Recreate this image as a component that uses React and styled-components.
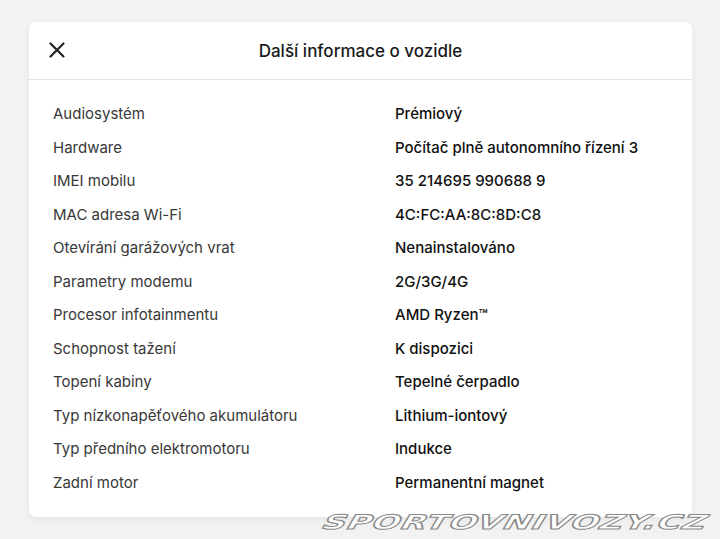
import React from "react";
import styled, { createGlobalStyle } from "styled-components";

const GlobalStyle = createGlobalStyle`
  html, body {
    margin: 0;
    padding: 0;
    background: #f2f2f2;
    font-family: Inter, "Noto Sans", sans-serif;
  }
`;

const rows = [
  ["Audiosystém", "Prémiový"],
  ["Hardware", "Počítač plně autonomního řízení 3"],
  ["IMEI mobilu", "35 214695 990688 9"],
  ["MAC adresa Wi-Fi", "4C:FC:AA:8C:8D:C8"],
  ["Otevírání garážových vrat", "Nenainstalováno"],
  ["Parametry modemu", "2G/3G/4G"],
  ["Procesor infotainmentu", "AMD Ryzen™"],
  ["Schopnost tažení", "K dispozici"],
  ["Topení kabiny", "Tepelné čerpadlo"],
  ["Typ nízkonapěťového akumulátoru", "Lithium-iontový"],
  ["Typ předního elektromotoru", "Indukce"],
  ["Zadní motor", "Permanentní magnet"],
];

function App() {
  return (
    <Page>
      <GlobalStyle />
      <Card>
        <Header>
          <CloseButton aria-label="Zavřít">
            <svg width="18" height="18" viewBox="0 0 18 18">
              <path
                d="M2.5 2.5 L15.5 15.5 M15.5 2.5 L2.5 15.5"
                stroke="#222"
                strokeWidth="2.2"
                strokeLinecap="round"
              />
            </svg>
          </CloseButton>
          <Title>Další informace o vozidle</Title>
        </Header>
        <List>
          {rows.map(([label, value]) => (
            <Row key={label}>
              <Label>{label}</Label>
              <Value>{value}</Value>
            </Row>
          ))}
        </List>
      </Card>
      <Watermark>SPORTOVNIVOZY.CZ</Watermark>
    </Page>
  );
}

const Page = styled.div`
  position: relative;
  width: 720px;
  height: 539px;
  padding: 22px 28px 0 29px;
  box-sizing: border-box;
  overflow: hidden;
`;

const Card = styled.div`
  background: #fff;
  border-radius: 7px;
  box-shadow: 0 2px 10px rgba(0, 0, 0, 0.06);
  height: 495px;
  display: flex;
  flex-direction: column;
`;

const Header = styled.div`
  position: relative;
  height: 57px;
  display: flex;
  align-items: center;
  justify-content: center;
  border-bottom: 1px solid #e2e2e2;
`;

const CloseButton = styled.button`
  position: absolute;
  left: 19px;
  top: 19px;
  width: 18px;
  height: 18px;
  padding: 0;
  border: none;
  background: none;
  display: flex;
`;

const Title = styled.div`
  font-size: 17px;
  font-weight: 500;
  color: #1a1a1a;
`;

const List = styled.div`
  display: flex;
  flex-direction: column;
  padding: 17px 0 0 24px;
`;

const Row = styled.div`
  display: grid;
  grid-template-columns: 342px 1fr;
  height: 33.5px;
  align-items: center;
`;

const Label = styled.div`
  font-size: 15px;
  color: #383838;
`;

const Value = styled.div`
  font-size: 15px;
  font-weight: 500;
  color: #111;
`;

const Watermark = styled.div`
  position: absolute;
  right: 18px;
  bottom: 7px;
  font-family: "DejaVu Sans", sans-serif;
  font-weight: bold;
  font-size: 20px;
  line-height: 20px;
  letter-spacing: 0.5px;
  color: #fff;
  -webkit-text-stroke: 1px #8a8a8a;
  transform-origin: right bottom;
  transform: scaleX(1.65) skewX(-20deg);
`;

export default App;
